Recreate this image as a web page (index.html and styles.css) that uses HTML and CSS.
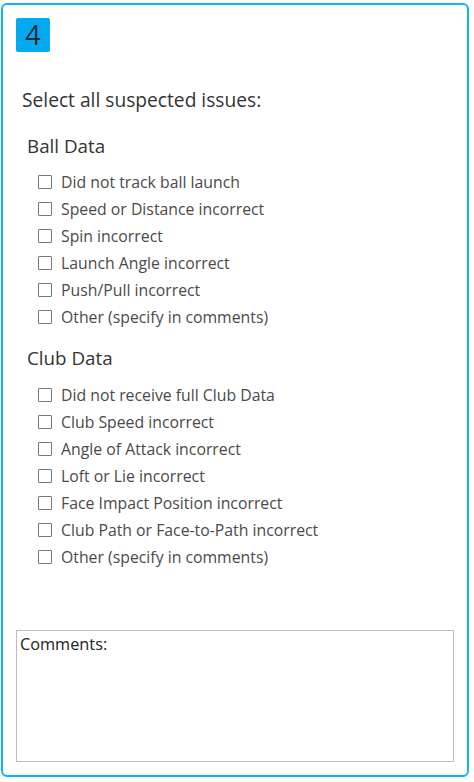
FILE: index.html
```html
<!DOCTYPE html>
<html>
<head>
<meta charset="utf-8">
<link rel="stylesheet" href="styles.css">
</head>
<body>
<div class="frame">
  <div class="badge">4</div>
  <div class="title">Select all suspected issues:</div>
  <div class="group">
    <div class="heading">Ball Data</div>
    <ul class="list">
      <li><span class="box"></span>Did not track ball launch</li>
      <li><span class="box"></span>Speed or Distance incorrect</li>
      <li><span class="box"></span>Spin incorrect</li>
      <li><span class="box"></span>Launch Angle incorrect</li>
      <li><span class="box"></span>Push/Pull incorrect</li>
      <li><span class="box"></span>Other (specify in comments)</li>
    </ul>
  </div>
  <div class="group">
    <div class="heading">Club Data</div>
    <ul class="list">
      <li><span class="box"></span>Did not receive full Club Data</li>
      <li><span class="box"></span>Club Speed incorrect</li>
      <li><span class="box"></span>Angle of Attack incorrect</li>
      <li><span class="box"></span>Loft or Lie incorrect</li>
      <li><span class="box"></span>Face Impact Position incorrect</li>
      <li><span class="box"></span>Club Path or Face-to-Path incorrect</li>
      <li><span class="box"></span>Other (specify in comments)</li>
    </ul>
  </div>
  <div class="comments">Comments:</div>
</div>
</body>
</html>
```

FILE: styles.css
```css
html, body {
  margin: 0;
  padding: 0;
  background: #ffffff;
}
body {
  font-family: "Open Sans", "Noto Sans", sans-serif;
  color: #404040;
}
.frame {
  box-sizing: border-box;
  margin: 3px 0 0 1px;
  width: 468px;
  height: 774px;
  border: 2px solid #0fb4f4;
  border-radius: 6px;
  padding: 13px 13px 13px 13px;
  display: flex;
  flex-direction: column;
}
.badge {
  width: 34px;
  height: 34px;
  background: #04aaf0;
  border-radius: 2px;
  color: #1e2a33;
  font-size: 27px;
  line-height: 34px;
  text-align: center;
}
.title {
  margin-top: 37px;
  margin-left: 6px;
  font-size: 19.2px;
  line-height: 22px;
  color: #333333;
}
.group {
  margin-left: 11px;
}
.heading {
  font-size: 18.8px;
  line-height: 22px;
  color: #333333;
  margin-top: 24px;
}
.group + .group .heading {
  margin-top: 17px;
}
.list {
  list-style: none;
  margin: 11px 0 0 0;
  padding: 0 0 0 11px;
}
.group + .group .list {
  margin-top: 12px;
}
.list li {
  display: flex;
  align-items: center;
  height: 27px;
  font-size: 15.8px;
  color: #4a4a4a;
}
.box {
  box-sizing: border-box;
  width: 14px;
  height: 14px;
  border: 1px solid #777777;
  border-radius: 1px;
  margin-right: 9px;
  flex: none;
}
.comments {
  margin-top: auto;
  box-sizing: border-box;
  width: 438px;
  height: 132px;
  border: 1px solid #bdbdbd;
  padding: 2px 3px;
  font-size: 16.3px;
  line-height: 22px;
  color: #222222;
}
```
